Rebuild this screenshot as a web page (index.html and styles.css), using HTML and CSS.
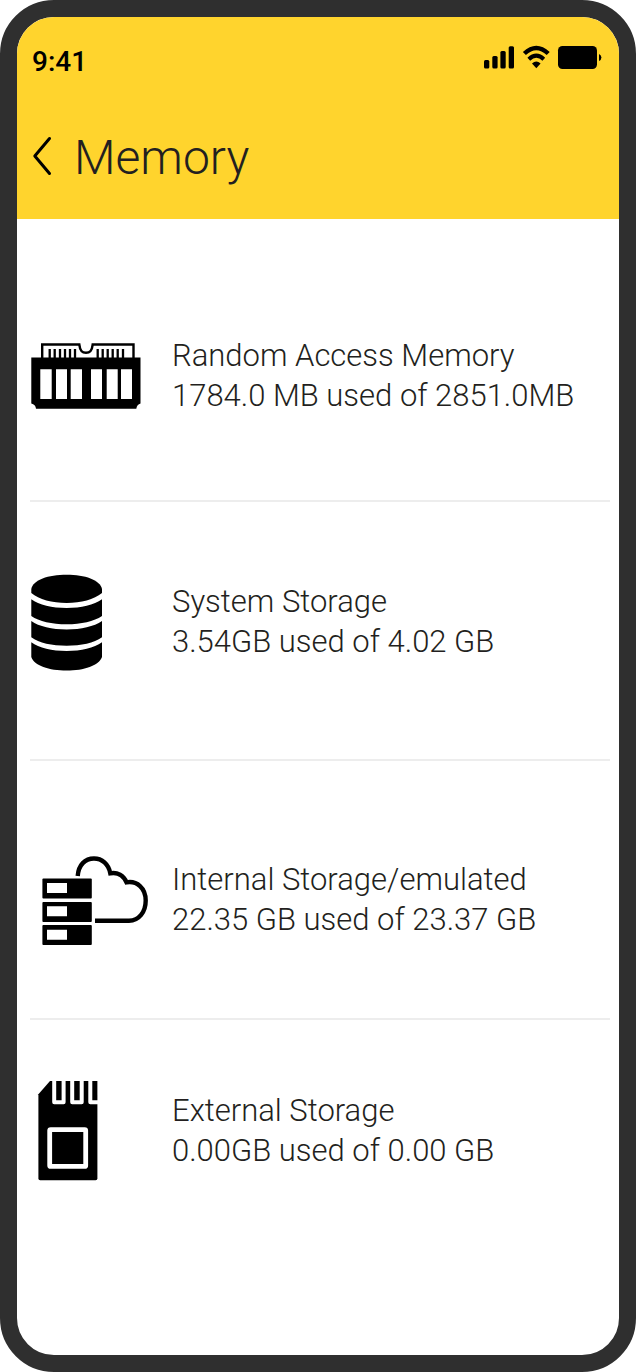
FILE: index.html
```html
<!DOCTYPE html>
<html lang="en">
<head>
  <meta charset="UTF-8">
  <meta name="viewport" content="width=device-width, initial-scale=1">
  <title>Memory</title>
  <link rel="stylesheet" href="styles.css">
</head>
<body>

  <div class="phone">
    <header class="header">
      <div class="status-bar">
        <span class="time">9:41</span>
        <svg class="status-icons" width="118" height="25" viewBox="0 0 118 25" aria-hidden="true">
          <!-- Signal -->
          <rect x="0" y="15" width="5.3" height="8.4" rx="1.5"/>
          <rect x="8.3" y="11" width="5.3" height="12.4" rx="1.5"/>
          <rect x="16.4" y="6" width="5.3" height="17.4" rx="1.5"/>
          <rect x="24.7" y="1.3" width="5.3" height="22.1" rx="1.5"/>
          <!-- Wifi -->
          <path d="M40.4 8.5 Q52.3 -2.6 64.2 8.5" fill="none" stroke="#000" stroke-width="4.4"/>
          <path d="M44.8 14.2 Q52.3 7.1 59.8 14.2" fill="none" stroke="#000" stroke-width="4"/>
          <path d="M48 18.6 Q52.3 14.2 56.6 18.6 L52.3 23.2 Z"/>
          <!-- Battery -->
          <rect x="74" y="1" width="39" height="23" rx="4.5"/>
          <path d="M115 9 Q117.4 10 117.4 12.5 Q117.4 15 115 16 Z"/>
        </svg>
      </div>
      <div class="title-bar">
        <button class="back" type="button" aria-label="Back">
          <svg width="20" height="40" viewBox="0 0 20 40">
            <path d="M17.5 2.5 L2.8 20 L17.5 37.5" fill="none" stroke="#000" stroke-width="3" stroke-linecap="round" stroke-linejoin="round"/>
          </svg>
        </button>
        <h1 class="title">Memory</h1>
      </div>
    </header>

    <main>
      <ul class="list">
        <li class="item ram">
          <svg class="icon" viewBox="0 0 120 100" aria-hidden="true">
            <path d="M12.2 33 V18.5 H49.3 C50 25 52 26.8 56 26.8 C60 26.8 62 25 62.7 18.5 H103.5 V33" fill="none" stroke="#000" stroke-width="2.4"/>
            <path d="M20 23 V33 M25 23 V33 M30.3 23 V33 M35.3 23 V33 M40.3 23 V33 M45.3 23 V33 M68 23 V33 M73 23 V33 M78 23 V33 M83 23 V33 M88 23 V33 M93.3 23 V33" transform="translate(-0.3 0)" stroke="#000" stroke-width="2.3"/>
            <path d="M1.3 31.5 H110.5 V77.5 Q107 78.5 106.3 82.8 H6 Q5.5 78.5 1.3 77.5 Z"/>
            <path fill="#fff" d="M10.3 43.3 h11.4 v29.7 h-11.4 Z M26 43.3 h11 v29.7 h-11 Z M40.7 43.3 h11.3 v29.7 h-11.3 Z M61 43.3 h11 v29.7 h-11 Z M76.7 43.3 h11 v29.7 h-11 Z M91 43.3 h11 v29.7 h-11 Z"/>
          </svg>
          <div class="text">
            <h2 class="name">Random Access Memory</h2>
            <p class="usage">1784.0 MB used of 2851.0MB</p>
          </div>
        </li>

        <li class="item system">
          <svg class="icon" viewBox="0 0 120 100" aria-hidden="true">
            <path d="M1.3 17 C3 8 18 2.8 36.7 2.8 C55 2.8 70 8 72 17 V21 C64 27.5 51 31 36.7 31 C22 31 9 27.5 1.3 21 Z"/>
            <path d="M1.3 27.3 C9 33 22 36 36.7 36 C51 36 64 33 72 27.3 V44 C64 49.5 51 52.3 36.7 52.3 C22 52.3 9 49.5 1.3 44 Z"/>
            <path d="M1.3 49 C9 54.5 22 57.5 36.7 57.5 C51 57.5 64 54.5 72 49 V65.3 C64 71 51 73.8 36.7 73.8 C22 73.8 9 71 1.3 65.3 Z"/>
            <path d="M1.3 70.3 C9 76 22 79 36.7 79 C51 79 64 76 72 70.3 V85 C69 93.5 54 98.6 36.7 98.6 C19 98.6 4 93.5 1.3 85 Z"/>
          </svg>
          <div class="text">
            <h2 class="name">System Storage</h2>
            <p class="usage">3.54GB used of 4.02 GB</p>
          </div>
        </li>

        <li class="item internal">
          <svg class="icon" viewBox="0 0 120 100" aria-hidden="true">
            <path d="M47.7 26 C48.5 15 55 8.5 64 8.5 C72 8.5 78.5 14 80.3 23.3 C87.5 22 93.5 25.5 96.5 32.3 C107 30.5 115.7 38 115.7 50.5 C115.7 62 109 70.7 99 70.7 H65" fill="none" stroke="#000" stroke-width="4.4"/>
            <rect x="12.4" y="28.6" width="49.4" height="20" rx="1"/>
            <rect x="12.4" y="51.9" width="49.4" height="20" rx="1"/>
            <rect x="12.4" y="75" width="49.4" height="20" rx="1"/>
            <path fill="#fff" d="M17 33 h20 v10 h-20 Z M17 56.2 h20 v10 h-20 Z M17 79.8 h20 v10 h-20 Z"/>
          </svg>
          <div class="text">
            <h2 class="name">Internal Storage/emulated</h2>
            <p class="usage">22.35 GB used of 23.37 GB</p>
          </div>
        </li>

        <li class="item external">
          <svg class="icon" viewBox="0 0 120 100" aria-hidden="true">
            <path d="M20 0 H67.4 V97.5 Q67.4 99.3 65.6 99.3 H10.2 Q8.4 99.3 8.4 97.5 V13.3 Z"/>
            <path d="M24.2 -1 V21.3 H33.6 V-1 M42.2 -1 V21.3 H51.7 V-1 M60.3 -1 V21.3 H68" fill="none" stroke="#fff" stroke-width="4" stroke-linejoin="round"/>
            <rect x="19.7" y="48.6" width="36" height="36.8" rx="1" fill="none" stroke="#fff" stroke-width="4.8"/>
          </svg>
          <div class="text">
            <h2 class="name">External Storage</h2>
            <p class="usage">0.00GB used of 0.00 GB</p>
          </div>
        </li>
      </ul>
    </main>
  </div>

</body>
</html>
```
FILE: styles.css
```css
* {
  box-sizing: border-box;
}

body {
  margin: 0;
  background: #fff;
  color: #231f20;
  font-family: Roboto, 'Liberation Sans', sans-serif;
}

.phone {
  min-height: 100vh;
  border: 17px solid #2f2f2f;
  border-radius: 54px;
  background: #fff;
  overflow: hidden;
}

.header {
  background: #ffd42d;
  padding: 28px 17px 30px 15px;
}

.status-bar {
  display: flex;
  justify-content: space-between;
  align-items: flex-start;
}

.time {
  color: #000;
  font-size: 28px;
  font-weight: 500;
  line-height: 34px;
}

.title-bar {
  display: flex;
  align-items: flex-start;
  gap: 22px;
  margin-top: 48px;
}

.back {
  display: flex;
  padding: 9px 0 0;
  border: none;
  background: none;
  cursor: pointer;
}

.title {
  margin: 0;
  font-size: 48px;
  font-weight: 300;
  line-height: 62px;
}

.list {
  margin: 0;
  padding: 0 9px 0 13px;
  list-style: none;
}

.item {
  display: flex;
  align-items: center;
  gap: 22px;
  border-bottom: 2px solid #ededed;
}

.ram {
  padding: 107px 0 74px;
}

.system {
  padding: 70px 0 87px;
}

.internal {
  padding: 89px 0 68px;
}

.external {
  padding: 61px 0;
  border-bottom: none;
}

.icon {
  flex: none;
  width: 120px;
  height: 100px;
}

.name,
.usage {
  margin: 0;
  font-size: 31px;
  font-weight: 300;
  line-height: 40px;
}
```
